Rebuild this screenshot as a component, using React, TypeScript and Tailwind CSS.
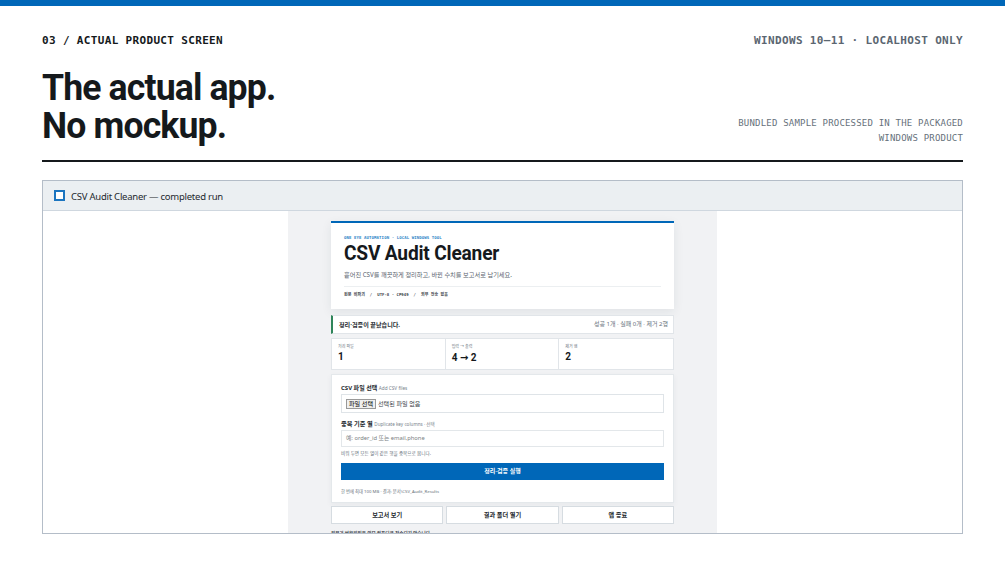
import React from 'react';

const stats = [
  { label: '처리 파일', value: '1' },
  { label: '입력 → 출력', value: '4 → 2' },
  { label: '제거 행', value: '2' },
];

const actions = ['보고서 보기', '결과 폴더 열기', '앱 종료'];

function Hero() {
  return (
    <section className="h-[88px] border-t-2 border-[#0067b8] bg-white px-[13px] shadow-[0_3px_10px_rgba(30,50,70,0.08)]">
      <p className="mt-[12px] h-[6px] font-['DejaVu_Sans_Mono',monospace] text-[4px] leading-[6px] font-bold tracking-[0.1px] text-[#2b83c6]">
        ONE EYE AUTOMATION · LOCAL WINDOWS TOOL
      </p>
      <h2 className="mt-[1px] h-[23px] origin-left scale-x-[0.957] font-[Roboto,sans-serif] text-[20px] leading-[23px] font-bold tracking-[-0.2px] text-[#15191c]">
        CSV Audit Cleaner
      </h2>
      <p className="mt-[5px] h-[10px] text-[6.2px] leading-[10px] text-[#59636e]">
        흩어진 CSV를 깨끗하게 정리하고, 바뀐 수치를 보고서로 남기세요.
      </p>
      <div className="mt-[6px] flex gap-[5px] border-t border-[#eceff1] pt-[4px] font-['DejaVu_Sans_Mono','Noto_Sans_CJK_KR',monospace] text-[4px] leading-[7px] font-bold text-[#3d444b]">
        <span>원본 비파괴</span>
        <span className="font-normal">/</span>
        <span>UTF-8 · CP949</span>
        <span className="font-normal">/</span>
        <span>외부 전송 없음</span>
      </div>
    </section>
  );
}

function StatusBar() {
  return (
    <section className="mt-[6px] flex h-[19px] items-center justify-between border border-l-2 border-[#e1e5e9] border-l-[#2f855a] bg-white pr-[5px] pl-[6px]">
      <strong className="text-[6.1px] text-[#24292e]">정리·검증이 끝났습니다.</strong>
      <span className="text-[6px] text-[#68727c]">성공 1개 · 실패 0개 · 제거 2행</span>
    </section>
  );
}

function Stats() {
  return (
    <section className="mt-[4px] grid h-[32px] grid-cols-3 divide-x divide-[#e1e5e9] border border-[#e1e5e9] bg-white">
      {stats.map((s) => (
        <div key={s.label} className="pt-[5px] pl-[6px]">
          <p className="h-[6px] text-[4px] leading-[6px] text-[#68727c]">{s.label}</p>
          <p
            className={`font-[Roboto,'DejaVu_Sans',sans-serif] text-[10px] font-bold text-[#15191c] ${
              s.value.includes('→') ? 'leading-[15px]' : 'leading-[13px]'
            }`}
          >
            {s.value}
          </p>
        </div>
      ))}
    </section>
  );
}

function CleanForm() {
  return (
    <section className="mt-[4px] h-[129px] border border-[#e4e8eb] bg-white px-[9px] shadow-[0_2px_6px_rgba(30,50,70,0.05)]">
      <p className="mt-[8px] h-[10px] text-[6px] leading-[10px] font-bold text-[#24292e]">
        CSV 파일 선택 <span className="text-[4.7px] font-normal text-[#78828b]">Add CSV files</span>
      </p>
      <div className="mt-px flex h-[19px] items-center border border-[#dfe4e8] pl-[4px] text-[6.1px] text-[#3d444b]">
        <button className="h-[10px] border border-[#999] bg-[#efefef] px-[2px] leading-[8px] text-black">파일 선택</button>
        <span className="ml-[2px]">선택된 파일 없음</span>
      </div>
      <p className="mt-[6px] h-[10px] text-[6.2px] leading-[10px] font-bold text-[#24292e]">
        중복 기준 열 <span className="text-[4.6px] font-normal text-[#78828b]">Duplicate key columns · 선택</span>
      </p>
      <div className="mt-[1px] flex h-[17px] items-center border border-[#e3e7ea] pl-[4px] text-[5.8px] text-[#7b7f83]">
        예: order_id 또는 email,phone
      </div>
      <p className="mt-[2px] h-[8px] text-[4.6px] leading-[8px] text-[#68727c]">
        비워 두면 모든 열이 같은 행을 중복으로 봅니다.
      </p>
      <button className="mt-[6px] flex h-[17px] w-full items-center justify-center bg-[#0067b8] text-[6px] font-bold text-white">
        정리·검증 실행
      </button>
      <p className="mt-[7px] h-[8px] text-[4.3px] leading-[8px] text-[#68727c]">
        한 번에 최대 100 MB · 결과: 문서\CSV_Audit_Results
      </p>
    </section>
  );
}

export default function App() {
  return (
    <main className="flex h-[565px] w-[1005px] flex-col overflow-hidden border-t-6 border-[#0067b8] bg-white px-[42px] text-[#15191c]">
      <div className="mt-[27px] flex h-[16px] items-center justify-between font-['DejaVu_Sans_Mono',monospace] text-[11px] font-bold tracking-[0.34px]">
        <span>03 / ACTUAL PRODUCT SCREEN</span>
        <span className="text-[#5b6671]">WINDOWS 10–11 · LOCALHOST ONLY</span>
      </div>
      <header className="mt-[19px] flex h-[94px] items-start justify-between border-b-2 border-[#15191c]">
        <h1 className="mt-[1px] origin-left scale-x-[0.962] font-[Roboto,sans-serif] text-[37px] leading-[38px] font-bold tracking-[-0.9px] whitespace-nowrap">
          The actual app.
          <br />
          No mockup.
        </h1>
        <p className="mt-[48px] w-[240px] text-right font-['DejaVu_Sans_Mono',monospace] text-[9px] leading-[15px] tracking-[0.2px] text-[#66717b]">
          BUNDLED SAMPLE PROCESSED IN THE PACKAGED WINDOWS PRODUCT
        </p>
      </header>
      <div className="mt-[18px] flex h-[354px] w-[921px] flex-col overflow-hidden border border-[#b4bdc8] font-['Noto_Sans','Noto_Sans_CJK_KR',sans-serif]">
        <div className="flex h-[30px] shrink-0 items-center gap-[6px] border-b border-[#cfd7df] bg-[#ebeff2] pl-[11px] text-[9.5px] tracking-[-0.24px] text-[#24292e]">
          <span className="size-[11px] border-2 border-[#1b75c0] bg-white" />
          <span className="pt-[3px]">CSV Audit Cleaner — completed run</span>
        </div>
        <div className="mx-auto h-[322px] w-[429px] shrink-0 overflow-hidden bg-[#f1f2f4] px-[43px] pt-[10px]">
          <Hero />
          <StatusBar />
          <Stats />
          <CleanForm />
          <div className="mt-[3px] grid h-[18px] grid-cols-3 gap-[3px]">
            {actions.map((a) => (
              <button key={a} className="border border-[#d6dce1] bg-white text-[6.2px] font-bold text-[#24292e]">
                {a}
              </button>
            ))}
          </div>
          <p className="mt-[6px] text-[4.6px] leading-[7px] font-bold text-[#3d444b]">원본과 변환파일은 외부 컴퓨터로 전송되지 않습니다.</p>
        </div>
      </div>
    </main>
  );
}
